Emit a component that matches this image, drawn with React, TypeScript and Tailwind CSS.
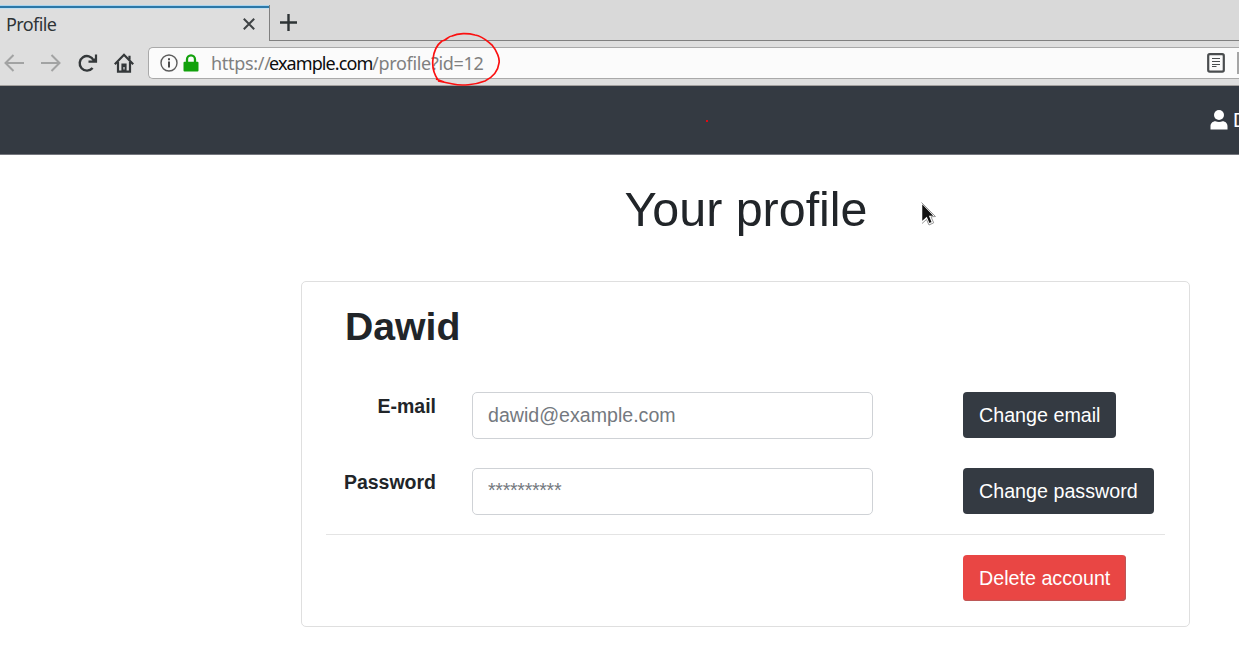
import type { ReactNode } from "react";

function Icon({ w, h, className = "", children }: { w: number; h: number; className?: string; children: ReactNode }) {
  return (
    <svg width={w} height={h} viewBox={`0 0 ${w} ${h}`} fill="none" className={`block shrink-0 ${className}`}>
      {children}
    </svg>
  );
}

function TabStrip() {
  return (
    <div className="flex h-[41px] bg-[#d9d9d9] pt-[5px]">
      <div className="flex w-[270px] shrink-0 flex-col border-r border-[#808080] bg-[#dedede]">
        <div className="h-[3px] border-t border-[#a9d4ef] bg-[#2c78a8]" />
        <div className="flex flex-1 items-center justify-between border-t border-[#bfdff2] pr-[14px] pb-[3px] pl-[6px]">
          <span className="text-[18px] leading-none tracking-[-0.6px] text-[#2e3436]">Profile</span>
          <Icon w={12} h={12}>
            <path d="M0.8 0.8 11.2 11.2M11.2 0.8 0.8 11.2" stroke="#3f4345" strokeWidth="2" />
          </Icon>
        </div>
      </div>
      <div className="flex flex-1 border-b border-[#808080] pl-[10px] pt-[9px]">
        <Icon w={17} h={17}>
          <path d="M8.5 0v17M0 8.5h17" stroke="#2e3436" strokeWidth="2.4" />
        </Icon>
      </div>
    </div>
  );
}

function Toolbar() {
  return (
    <div className="flex h-[45px] items-center border-b border-[#a3a09e] bg-[#dedede]">
      <div className="flex shrink-0 items-center pl-1">
        <Icon w={20} h={18}>
          <path d="M20 9H2M9.5 1 1.5 9l8 8" stroke="#a2a3a3" strokeWidth="2" />
        </Icon>
        <Icon w={20} h={18} className="ml-[17px]">
          <path d="M0 9h18M10.5 1l8 8-8 8" stroke="#a2a3a3" strokeWidth="2" />
        </Icon>
        <Icon w={20} h={18} className="ml-[17px]">
          <path d="M15.600 6.200A7.300 7.300 0 1 0 14.600 14" stroke="#34383a" strokeWidth="2.4" />
          <path d="M18 0.500v7.200h-7.500" stroke="#34383a" strokeWidth="2.2" />
          <path d="M17.500 3.500v4h-4z" fill="#34383a" />
        </Icon>
        <Icon w={20} h={20} className="ml-4">
          <path d="M0.8 11.2 10 1.800l9.200 9.400" stroke="#34383a" strokeWidth="2.2" />
          <path d="M4 9v9.600h12V9M15.500 2.800v4" stroke="#34383a" strokeWidth="2.2" />
          <path d="M7.400 18v-7.500h5.200V18" fill="#34383a" />
          <path d="M10 14v2.500" stroke="#dedede" strokeWidth="1.2" />
        </Icon>
      </div>
      <div className="ml-[14px] flex h-8 flex-1 items-center rounded-l-[5px] border border-r-0 border-[#a9a9a9] bg-[#fbfbfb] pl-[11px]">
        <Icon w={18} h={18}>
          <circle cx="9" cy="9" r="8" stroke="#5c5c5c" strokeWidth="1.4" />
          <path d="M9 7.5v6M9 4.2v2" stroke="#4b4b4b" strokeWidth="2" />
        </Icon>
        <Icon w={16} h={18} className="ml-[5px]">
          <path d="M4 8.5V5.4a4 4 0 0 1 8 0v3.100" stroke="#12a10c" strokeWidth="2.3" />
          <rect x="0.5" y="7.8" width="15" height="9.7" rx="1" fill="#12a10c" />
        </Icon>
        <div className="relative ml-[12px] text-[18px] leading-none whitespace-pre text-[#808080]">
          <span className="inline-block w-[58px] tracking-[-0.3px]">https://</span>
          <span className="inline-block w-[103px] tracking-[-0.9px] text-[#0c0c0d]">example.com</span>
          <span className="inline-block tracking-[-0.3px]">/profile?id=12</span>
          <svg width="72" height="58" viewBox="0 0 72 58" fill="none" className="absolute -top-[23px] left-[220px]">
            <path
              d="M7 49C3 43 1 35 2 28 3 19 7 13 11 10 15 10 17 5 21 5 27 2 37 2 44 4 52 5 57 11 61 14 66 20 69 28 68 32 67 41 60 47 54 50 44 54 30 55 22 53L7 50M5 48 13 51"
              stroke="#fb1010"
              strokeWidth="1.7"
            />
          </svg>
        </div>
        <Icon w={18} h={20} className="mr-[12px] ml-auto">
          <rect x="1.2" y="1.2" width="15.6" height="17.4" rx="1.5" stroke="#4a4d4f" strokeWidth="2.2" />
          <path d="M5 5.500h8M5 8.500h8M5 11.500h8M5 13.500h4.500" stroke="#4a4d4f" strokeWidth="1.2" />
        </Icon>
        <div className="h-[22px] w-[2px] bg-[#a5a5a5]" />
      </div>
    </div>
  );
}

function Navbar() {
  return (
    <header className="relative flex h-[69px] items-center overflow-hidden border-b border-[#74767d] bg-[#343a42]">
      <span className="absolute top-[34px] left-[706px] size-[2px] bg-[#e00a12]" />
      <div className="ml-[1210px] flex shrink-0 items-center text-[20px] text-white">
        <Icon w={18} h={20} className="-mt-px">
          <circle cx="9" cy="5" r="5" fill="#fff" />
          <path d="M.5 19.500v-3c0-3 2-5.200 5-5.200 2 1 5 1 7 0 3 0 5 2.200 5 5.200v3z" fill="#fff" />
        </Icon>
        <span className="ml-[5px] leading-none">D</span>
      </div>
    </header>
  );
}

const button = "h-[46px] rounded-[4px] px-4 text-[19.7px] leading-[44px] whitespace-nowrap text-white";
const field =
  "ml-9 h-[47px] w-[401px] shrink-0 rounded-[5px] border border-[#cfd2d6] bg-white px-[15px] text-[19.6px] outline-none placeholder:text-[#747980]";

function Row({
  label,
  placeholder,
  action,
  className,
  fieldClass = "",
}: {
  label: string;
  placeholder: string;
  action: string;
  className: string;
  fieldClass?: string;
}) {
  return (
    <div className={`flex ${className}`}>
      <label className="w-[134px] shrink-0 pt-[2px] text-right text-[19.5px] leading-[24px] font-bold text-[#212529]">{label}</label>
      <input className={`${field} ${fieldClass}`} placeholder={placeholder} aria-label={label} />
      <button className={`ml-[90px] bg-[#343a42] ${button}`}>{action}</button>
    </div>
  );
}

export default function App() {
  return (
    <div className="h-[648px] w-[1239px] overflow-hidden bg-white font-['Liberation_Sans',Arial,sans-serif]">
      <div className="font-['Noto_Sans',sans-serif]">
        <TabStrip />
        <Toolbar />
      </div>
      <Navbar />
      <main className="pl-[301px]">
        <h1 className="w-[890px] pt-[24px] text-center text-[48.400px] leading-[60px] text-[#212529]">Your profile</h1>
        <section className="mt-[42px] h-[346px] w-[889px] rounded-[5px] border border-[#dfdfdf]">
          <h2 className="pt-[21px] pl-[43px] text-[39.200px] leading-[48px] font-bold text-[#212529]">Dawid</h2>
          <Row label="E-mail" placeholder="dawid@example.com" action="Change email" className="mt-[41px]" />
          <Row
            label="Password"
            placeholder="**********"
            action="Change password"
            className="mt-[29px]"
            fieldClass="tracking-[-0.3px] pb-[2px]"
          />
          <hr className="mx-6 mt-[19px] border-[#e4e4e4]" />
          <button className={`mt-5 ml-[661px] bg-[#e94644] shadow-[inset_-1px_-1px_1px_#b85a5a] ${button}`}>Delete account</button>
        </section>
      </main>
      <svg width="18" height="26" viewBox="0 0 18 26" className="absolute top-[201px] left-[920px]">
        <path d="M1.500 1.500v20l5-4.500 2.500 6 3.500-1.500-2.500-6h5z" fill="#111" stroke="#fff" strokeWidth="1.500" />
        <path d="M1.500 1.500 15.500 15.500 11 15.800 13.700 21.800 9 24 6.500 18.500 2 22.500" fill="none" stroke="#8a8a8a" strokeWidth="0.900" />
      </svg>
    </div>
  );
}
